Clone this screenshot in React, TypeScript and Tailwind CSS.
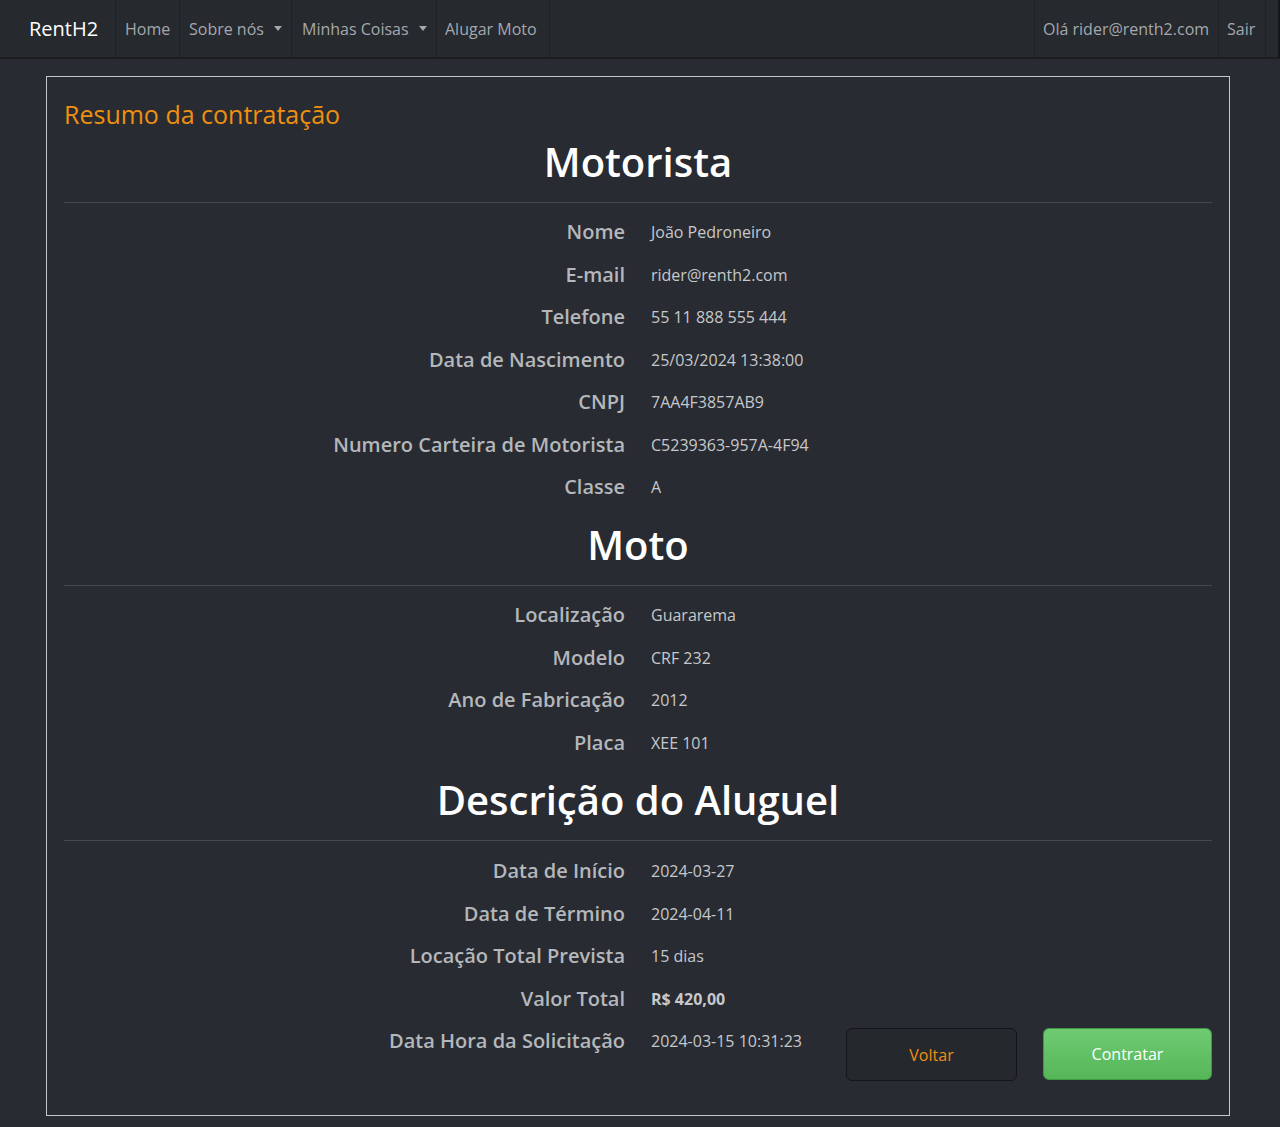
import React from "react";

const font = { fontFamily: '"Open Sans", "Noto Sans", sans-serif' };

function Caret() {
  return (
    <span className="ml-[10px] inline-block w-0 h-0 border-l-[4px] border-r-[4px] border-t-[5px] border-l-transparent border-r-transparent border-t-[#a4a8ad] align-middle" />
  );
}

function Row({ label, value, bold }: { label: string; value: string; bold?: boolean }) {
  return (
    <div className="flex h-[42.5px] items-center">
      <div className="w-[574px] pr-[13px] text-right text-[20px] font-semibold text-[#b4b7bb]">{label}</div>
      <div className={"pl-[13px] text-[16px] text-[#c6c8cb] " + (bold ? "font-bold" : "")}>{value}</div>
    </div>
  );
}

function Section({ title, rows }: { title: string; rows: [string, string][] }) {
  return (
    <div>
      <div className="h-[58px] flex items-center justify-center text-[40px] font-semibold text-white leading-none">{title}</div>
      <div className="mt-[11px] h-px bg-[#45484e]" />
      <div className="mt-[8px]">
        {rows.map(([l, v]) => (
          <Row key={l} label={l} value={v} />
        ))}
      </div>
    </div>
  );
}

export default function App() {
  return (
    <div className="min-h-[1127px] w-[1280px] bg-[#282b31]" style={font}>
      <nav className="h-[59px] flex bg-[#26292e] border-b-2 border-[#1b1d21] border-r-2 border-r-[#15171a]">
        <div className="w-[116px] pl-[29px] flex items-center text-[20px] text-white border-r border-[#1f2125]">RentH2</div>
        <div className="w-[64px] flex items-center pl-[9px] text-[16px] text-[#a4a8ad] border-r border-[#1f2125]">Home</div>
        <div className="w-[112px] flex items-center pl-[9px] text-[16px] text-[#a4a8ad] border-r border-[#1f2125]">Sobre nós<Caret /></div>
        <div className="w-[145px] flex items-center pl-[10px] text-[16px] text-[#a4a8ad] border-r border-[#1f2125]">Minhas Coisas<Caret /></div>
        <div className="w-[113px] flex items-center pl-[8px] text-[16px] text-[#a4a8ad] border-r border-[#1f2125]">Alugar Moto</div>
        <div className="flex-1" />
        <div className="w-[185px] flex items-center pl-[8px] text-[16px] text-[#a4a8ad] border-l border-r border-[#1f2125]">Olá rider@renth2.com</div>
        <div className="w-[47px] flex items-center pl-[8px] text-[16px] text-[#a4a8ad] border-r border-[#1f2125]">Sair</div>
        <div className="w-[12px]" />
      </nav>
      <div className="pt-[17px] pb-[12px]">
        <div className="ml-[46px] w-[1184px] border border-[#c4c6c9] px-[17px] pt-[20px] pb-[34px]">
          <div className="h-[36px] flex items-center text-[25px] text-[#f0900f]">Resumo da contratação</div>
          <Section
            title="Motorista"
            rows={[
              ["Nome", "João Pedroneiro"],
              ["E-mail", "rider@renth2.com"],
              ["Telefone", "55 11 888 555 444"],
              ["Data de Nascimento", "25/03/2024 13:38:00"],
              ["CNPJ", "7AA4F3857AB9"],
              ["Numero Carteira de Motorista", "C5239363-957A-4F94"],
              ["Classe", "A"],
            ]}
          />
          <div className="mt-[7.5px]">
            <Section
              title="Moto"
              rows={[
                ["Localização", "Guararema"],
                ["Modelo", "CRF 232"],
                ["Ano de Fabricação", "2012"],
                ["Placa", "XEE 101"],
              ]}
            />
          </div>
          <div className="mt-[7px]">
            <div className="h-[58px] flex items-center justify-center text-[40px] font-semibold text-white leading-none">Descrição do Aluguel</div>
            <div className="mt-[11px] h-px bg-[#45484e]" />
            <div className="mt-[9px]">
              <Row label="Data de Início" value="2024-03-27" />
              <Row label="Data de Término" value="2024-04-11" />
              <Row label="Locação Total Prevista" value="15 dias" />
              <Row label="Valor Total" value="R$ 420,00" bold />
              <div className="flex">
                <div className="w-[574px] h-[42.5px] flex items-center justify-end pr-[13px] text-[20px] font-semibold text-[#b4b7bb]">Data Hora da Solicitação</div>
                <div className="h-[42.5px] w-[208px] pl-[13px] flex items-center text-[16px] text-[#c6c8cb]">2024-03-15 10:31:23</div>
                <div className="flex gap-[26px] pt-[8px]">
                  <button className="w-[171px] h-[53px] rounded-[6px] border border-[#141518] bg-[#25282d] text-[16px] text-[#ef8f14]">Voltar</button>
                  <button className="w-[169px] h-[52px] rounded-[6px] border border-[#3f9a42] bg-gradient-to-b from-[#6fcb72] to-[#55b658] text-[16px] text-white">Contratar</button>
                </div>
              </div>
            </div>
          </div>
        </div>
      </div>
    </div>
  );
}
